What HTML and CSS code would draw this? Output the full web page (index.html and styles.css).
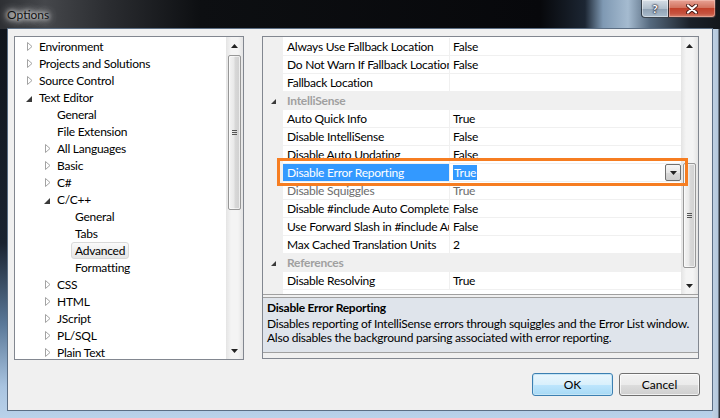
FILE: index.html
```html
<!DOCTYPE html>
<html lang="en">
<head>
    <meta charset="UTF-8">
    <title>Options</title>
    <link rel="stylesheet" href="styles.css">
</head>
<body>
    <svg class="defs" width="0" height="0">
        <symbol id="tw-closed" viewBox="0 0 6 9"><path d="M0.5 0.5 L5 4.5 L0.5 8.5 Z" fill="#fff" stroke="#a3a3a3"/></symbol>
        <symbol id="tw-open" viewBox="0 0 6 6"><path d="M6 0 V6 H0 Z" fill="#3a3a3a"/></symbol>
        <symbol id="arr-up" viewBox="0 0 7 4"><path d="M0 4 L3.5 0 L7 4 Z" fill="#222"/></symbol>
        <symbol id="arr-down" viewBox="0 0 7 4"><path d="M0 0 H7 L3.5 4 Z" fill="#222"/></symbol>
    </svg>

    <div class="window">
        <div class="titlebar">
            <span class="title">Options</span>
            <div class="caption">
                <span class="cap-btn help">?</span>
                <span class="cap-btn close">
                    <svg width="12" height="10" viewBox="0 0 12 10">
                        <path d="M2 1.5 L10 8.5 M10 1.5 L2 8.5" stroke="#4a1a14" stroke-width="4" stroke-linecap="round"/>
                        <path d="M2 1.5 L10 8.5 M10 1.5 L2 8.5" stroke="#fff" stroke-width="2.2" stroke-linecap="round"/>
                    </svg>
                </span>
            </div>
        </div>

        <div class="frame">
            <div class="client">
                <div class="panes">
                    <div class="tree">
                        <ul class="tree-list">
                            <li class="node"><i class="tw"><svg><use href="#tw-closed"/></svg></i><span class="label">Environment</span></li>
                            <li class="node"><i class="tw"><svg><use href="#tw-closed"/></svg></i><span class="label">Projects and Solutions</span></li>
                            <li class="node"><i class="tw"><svg><use href="#tw-closed"/></svg></i><span class="label">Source Control</span></li>
                            <li class="node"><i class="tw"><svg class="open"><use href="#tw-open"/></svg></i><span class="label">Text Editor</span></li>
                            <li class="node lv1"><i class="tw"></i><span class="label">General</span></li>
                            <li class="node lv1"><i class="tw"></i><span class="label">File Extension</span></li>
                            <li class="node lv1"><i class="tw"><svg><use href="#tw-closed"/></svg></i><span class="label">All Languages</span></li>
                            <li class="node lv1"><i class="tw"><svg><use href="#tw-closed"/></svg></i><span class="label">Basic</span></li>
                            <li class="node lv1"><i class="tw"><svg><use href="#tw-closed"/></svg></i><span class="label">C#</span></li>
                            <li class="node lv1"><i class="tw"><svg class="open"><use href="#tw-open"/></svg></i><span class="label">C/C++</span></li>
                            <li class="node lv2"><i class="tw"></i><span class="label">General</span></li>
                            <li class="node lv2"><i class="tw"></i><span class="label">Tabs</span></li>
                            <li class="node lv2"><i class="tw"></i><span class="label current">Advanced</span></li>
                            <li class="node lv2"><i class="tw"></i><span class="label">Formatting</span></li>
                            <li class="node lv1"><i class="tw"><svg><use href="#tw-closed"/></svg></i><span class="label">CSS</span></li>
                            <li class="node lv1"><i class="tw"><svg><use href="#tw-closed"/></svg></i><span class="label">HTML</span></li>
                            <li class="node lv1"><i class="tw"><svg><use href="#tw-closed"/></svg></i><span class="label">JScript</span></li>
                            <li class="node lv1"><i class="tw"><svg><use href="#tw-closed"/></svg></i><span class="label">PL/SQL</span></li>
                            <li class="node lv1"><i class="tw"><svg><use href="#tw-closed"/></svg></i><span class="label">Plain Text</span></li>
                        </ul>
                        <div class="vscroll">
                            <div class="sb-btn"><svg><use href="#arr-up"/></svg></div>
                            <div class="sb-track"><div class="sb-thumb"></div></div>
                            <div class="sb-btn"><svg><use href="#arr-down"/></svg></div>
                        </div>
                    </div>

                    <div class="propgrid">
                        <div class="pg-main">
                            <div class="pg-rows">
                                <div class="pg-row"><span class="pg-gutter"></span><span class="pg-name">Always Use Fallback Location</span><span class="pg-value">False</span></div>
                                <div class="pg-row"><span class="pg-gutter"></span><span class="pg-name">Do Not Warn If Fallback Location</span><span class="pg-value">False</span></div>
                                <div class="pg-row"><span class="pg-gutter"></span><span class="pg-name">Fallback Location</span><span class="pg-value"></span></div>
                                <div class="pg-row pg-cat"><span class="pg-gutter"><svg><use href="#tw-open"/></svg></span><span class="pg-catname">IntelliSense</span></div>
                                <div class="pg-row"><span class="pg-gutter"></span><span class="pg-name">Auto Quick Info</span><span class="pg-value">True</span></div>
                                <div class="pg-row"><span class="pg-gutter"></span><span class="pg-name">Disable IntelliSense</span><span class="pg-value">False</span></div>
                                <div class="pg-row"><span class="pg-gutter"></span><span class="pg-name">Disable Auto Updating</span><span class="pg-value">False</span></div>
                                <div class="pg-row selected"><span class="pg-gutter"></span><span class="pg-name">Disable Error Reporting</span><span class="pg-value"><span class="sel-text">True</span><span class="dd-btn"><svg><use href="#arr-down"/></svg></span></span></div>
                                <div class="pg-row readonly"><span class="pg-gutter"></span><span class="pg-name">Disable Squiggles</span><span class="pg-value">True</span></div>
                                <div class="pg-row"><span class="pg-gutter"></span><span class="pg-name">Disable #include Auto Complete</span><span class="pg-value">False</span></div>
                                <div class="pg-row"><span class="pg-gutter"></span><span class="pg-name">Use Forward Slash in #include Auto Complete</span><span class="pg-value">False</span></div>
                                <div class="pg-row"><span class="pg-gutter"></span><span class="pg-name">Max Cached Translation Units</span><span class="pg-value">2</span></div>
                                <div class="pg-row pg-cat"><span class="pg-gutter"><svg><use href="#tw-open"/></svg></span><span class="pg-catname">References</span></div>
                                <div class="pg-row"><span class="pg-gutter"></span><span class="pg-name">Disable Resolving</span><span class="pg-value">True</span></div>
                            </div>
                            <div class="vscroll">
                                <div class="sb-btn"><svg><use href="#arr-up"/></svg></div>
                                <div class="sb-track"><div class="sb-thumb"></div></div>
                                <div class="sb-btn"><svg><use href="#arr-down"/></svg></div>
                            </div>
                        </div>
                        <div class="pg-desc">
                            <div class="desc-title">Disable Error Reporting</div>
                            <div class="desc-text">Disables reporting of IntelliSense errors through squiggles and the Error List window.<br>Also disables the background parsing associated with error reporting.</div>
                        </div>
                        <div class="annot"></div>
                    </div>
                </div>

                <div class="buttons">
                    <button class="btn default">OK</button>
                    <button class="btn">Cancel</button>
                </div>
            </div>
        </div>
    </div>
</body>
</html>
```

FILE: styles.css
```css
* { box-sizing: border-box; }
html, body { margin: 0; }
body { width: 720px; height: 418px; overflow: hidden; font-family: Lato, "Liberation Sans", sans-serif; font-size: 12px; letter-spacing: -0.25px; color: #000; background: #15181c; }
.defs { position: absolute; width: 0; height: 0; }

.window { width: 720px; height: 418px; display: flex; flex-direction: column; }

/* title bar */
.titlebar { height: 29px; flex: none; display: flex; align-items: flex-start;
    background: linear-gradient(to right, #2e3034 0, #45474b 45px, #2a2c30 110px, #0d0f12 200px, #07080b 540px, #1c2633 585px, #7f99b3 603px, #a5bbd0 628px, #55697e 650px, #1b2129 690px, #12161b 720px); }
.title { margin: 7px 0 0 7px; color: #111; letter-spacing: 0; text-shadow: 0 0 4px #fff, 0 0 8px #fff, 0 0 10px rgba(255,255,255,.8); }
.caption { margin-left: auto; margin-right: 4px; display: flex; }
.cap-btn { height: 18px; display: flex; align-items: center; justify-content: center; border: 1px solid rgba(20,30,40,.8); border-top: none; }
.help { width: 27px; border-radius: 0 0 0 4px; border-right: none; font-weight: bold; font-size: 12px; color: #fff; text-shadow: 0 0 1px #223, 0 0 2px #223, 0 0 2px #223;
    background: linear-gradient(#d6dee6, #b1bfcc 50%, #8fa1b3 51%, #a9bbcc); box-shadow: inset 0 0 0 1px rgba(255,255,255,.45); }
.close { width: 48px; border-radius: 0 0 4px 0;
    background: linear-gradient(#e8a295, #d2735f 45%, #c2412b 50%, #c65340 80%, #d6816c); box-shadow: inset 0 0 0 1px rgba(255,220,210,.4); }

/* window frame and client area */
.frame { flex: 1; padding: 0 8px 8px 8px;
    background: linear-gradient(to right, transparent 712px, #c1d2e4 712px, #b5c8dc 718px, #30363f 719px),
                linear-gradient(#10151c 0%, #1a2330 55%, #5b7999 76%, #a9c4e0 92%, #bad2ea 100%); }
.client { height: 100%; background: #f0f0f0; padding: 7px 13px 14px 6px; display: flex; flex-direction: column; box-shadow: 0 0 0 1px #5b6e84; }
.panes { display: flex; gap: 18px; height: 324px; }

/* tree */
.tree { width: 230px; height: 324px; border: 1px solid #828790; background: #fff; display: flex; }
.tree-list { flex: 1; list-style: none; margin: 0; padding: 1px 0 0; overflow: hidden; }
.node { height: 17px; display: flex; align-items: center; padding-left: 12px; white-space: nowrap; }
.node.lv1 { padding-left: 30px; }
.node.lv2 { padding-left: 48px; }
.tw { width: 12px; flex: none; display: flex; align-items: center; }
.tw svg { width: 6px; height: 9px; }
.tw svg.open { width: 6px; height: 6px; margin: 2px 0 0 -1px; }
.label { line-height: 17px; }
.label.current { margin-left: -4px; padding: 0 3px; height: 17px; line-height: 15px; border: 1px solid #d9d9d9; border-radius: 3px; background: linear-gradient(#fafafa, #e6e6e6); }

/* scroll bars */
.vscroll { width: 17px; flex: none; display: flex; flex-direction: column; background: linear-gradient(to right, #e4e4e4, #f4f4f4 30%, #f4f4f4 70%, #e4e4e4); }
.sb-btn { height: 17px; flex: none; display: flex; align-items: center; justify-content: center; }
.sb-btn svg { width: 7px; height: 4px; }
.sb-track { flex: 1; padding: 0 2px; }
.sb-thumb { display: flex; align-items: center; justify-content: center; border: 1px solid #979797; border-radius: 2px;
    background: linear-gradient(to right, #f4f4f4, #e9e9e9 45%, #d8d8d8 55%, #d0d0d0); box-shadow: inset 0 0 0 1px rgba(255,255,255,.6); }
.sb-thumb::after { content: ""; width: 5px; height: 1px; margin-top: -4px; background: #555; box-shadow: 0 2px #555, 0 4px #555; }
.tree .sb-thumb { margin-top: 1px; height: 155px; }
.propgrid .sb-thumb { margin-top: 109px; height: 105px; }

/* property grid */
.propgrid { width: 437px; height: 323px; border: 1px solid #828790; background: #f0f0f0; position: relative; display: flex; flex-direction: column; }
.pg-main { height: 258px; flex: none; display: flex; border-bottom: 1px solid #a0a0a0; }
.pg-rows { flex: 1; padding-top: 1px; background: linear-gradient(to right, #f0f0f0 20px, #fff 20px); }
.pg-row { display: grid; grid-template-columns: 20px 166px 1fr; height: 18px; }
.pg-gutter { display: flex; align-items: center; justify-content: center; }
.pg-gutter svg { width: 5px; height: 5px; margin-top: 1px; }
.pg-name, .pg-value { line-height: 17px; border-bottom: 1px solid #f0f0f0; white-space: nowrap; overflow: hidden; }
.pg-name { padding-left: 4px; }
.pg-value { padding-left: 3px; border-left: 1px solid #f0f0f0; display: flex; align-items: center; }
.pg-cat { background: #f0f0f0; }
.pg-catname { grid-column: 2 / 4; padding-left: 4px; line-height: 18px; font-weight: bold; color: #a0a0a0; }
.selected .pg-name { background: #3399ff; color: #fff; }
.sel-text { background: #3399ff; color: #fff; line-height: 15px; padding: 0 1px; }
.dd-btn { margin-left: auto; width: 16px; height: 17px; display: flex; align-items: center; justify-content: center; border: 1px solid #707070; border-radius: 2px; background: linear-gradient(#f6f6f6, #e6e6e6 50%, #d9d9d9 51%, #cdcdcd); }
.dd-btn svg { width: 7px; height: 4px; }
.readonly .pg-name, .readonly .pg-value { color: #6d6d6d; }

.pg-desc { margin-top: 2px; height: 56px; flex: none; border-top: 1px solid #a0a0a0; border-bottom: 1px solid #a0a0a0; background: #dfe4eb; padding: 2px 4px 0; }
.desc-title { font-weight: bold; line-height: 16px; }
.desc-text { line-height: 14px; margin-top: 1px; white-space: nowrap; }

.annot { position: absolute; left: 14px; top: 121px; width: 411px; height: 28px; border: 3px solid #f67d21; }

/* dialog buttons */
.buttons { margin-top: 13px; display: flex; justify-content: flex-end; gap: 6px; margin-right: -1px; }
.btn { width: 81px; height: 23px; font: inherit; letter-spacing: 0; color: #000; border: 1px solid #707070; border-radius: 3px; padding: 0;
    background: linear-gradient(#f2f2f2, #ebebeb 50%, #dddddd 51%, #cfcfcf); box-shadow: inset 0 0 0 1px rgba(255,255,255,.7); }
.btn.default { border-color: #3c7fb1; background: linear-gradient(#eaf6fd, #d9f0fc 50%, #bee6fd 51%, #a7d9f5); box-shadow: inset 0 0 0 1px #c4e5f6; }
```
